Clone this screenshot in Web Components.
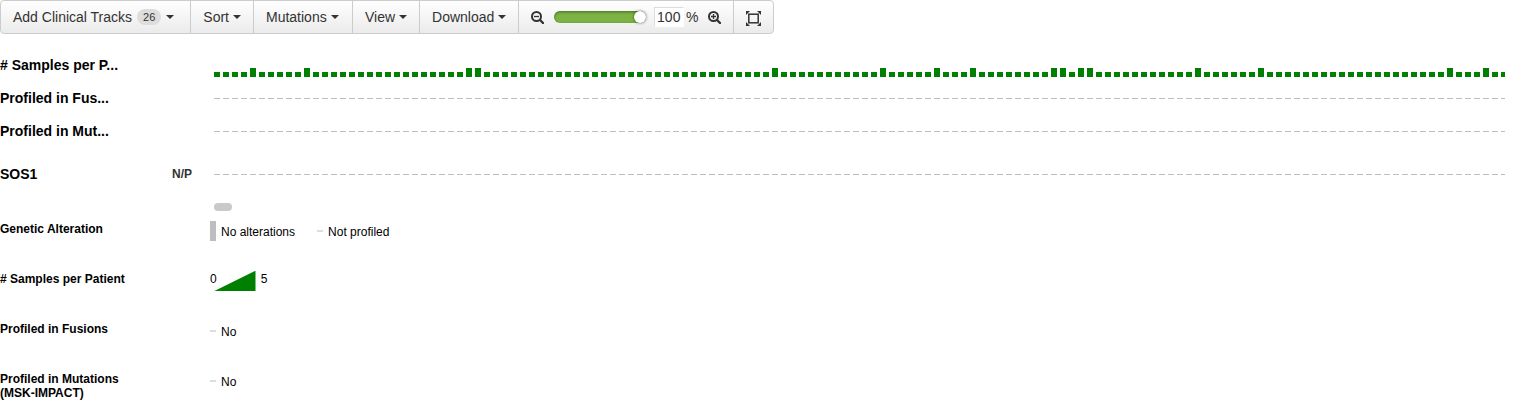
<!DOCTYPE html>
<html lang="en">
<head>
<meta charset="utf-8">
<title>Oncoprint</title>
<style>
body { margin: 0; background: #fff; font-family: "Liberation Sans", Arial, sans-serif; font-size: 14px; color: #000; }
</style>
</head>
<body>
<onco-print></onco-print>
<script>
const define = (name, html, setup) => {
  const template = document.createElement('template');
  template.innerHTML = html;
  customElements.define(name, class extends HTMLElement {
    constructor() {
      super();
      this.attachShadow({ mode: 'open' }).append(template.content.cloneNode(true));
    }
    connectedCallback() { if (setup) setup(this, this.shadowRoot); }
  });
};

define('menu-button', `
<style>
:host { display: flex; box-sizing: border-box; border-right: 1px solid #ccc; }
button { display: flex; align-items: center; gap: 4px; padding: 0 12px; border: 0; background: none; font: inherit; line-height: 20px; color: #333; white-space: nowrap; cursor: pointer; }
.caret { border: 4px solid transparent; border-top-color: #333; border-bottom: 0; }
:host([counted]) button { gap: 5px; padding-right: 16px; }
:host([plain]) { border-right: 0; }
:host([plain]) .caret { display: none; }
</style>
<button type="button"><slot></slot><span class="caret"></span></button>`,
(host, root) => {
  const label = host.getAttribute('label');
  if (label) root.querySelector('button').setAttribute('aria-label', label);
});

define('count-badge', `
<style>
:host { display: block; padding: 1px 6px; border-radius: 8px; background: #ddd; font-size: 11px; line-height: 14px; }
</style><slot></slot>`);

define('zoom-control', `
<style>
:host { display: flex; align-items: center; padding: 0 12px; border-right: 1px solid #ccc; color: #333; }
button { display: flex; padding: 0; border: 0; background: none; color: inherit; }
svg { display: block; width: 13px; height: 13px; fill: none; stroke: currentColor; }
input { box-sizing: border-box; margin: 0; font: inherit; color: inherit; }
input[type=range] { appearance: none; width: 92px; height: 12px; margin: 0 8px 0 10px; border-radius: 6px; background: #7cb342; box-shadow: inset 0 1px 3px rgba(0,0,0,.4); outline: 0; }
input[type=range]::-webkit-slider-thumb { appearance: none; width: 12px; height: 12px; border-radius: 6px; background: #fff; box-shadow: 0 0 3px rgba(0,0,0,.6); }
input[type=text] { width: 30px; height: 20px; padding: 0 0 0 2px; border: 1px solid #fff; border-top-color: #ddd; border-left-color: #ddd; background: #fff; }
label { display: flex; align-items: center; gap: 2px; margin-right: 9px; }
</style>
<button type="button" aria-label="Zoom out"><svg viewBox="0 0 13 13"><circle cx="5.5" cy="5.5" r="4.5" stroke-width="2"/><path d="M9 9l3 3" stroke-width="2.4" stroke-linecap="round"/><path d="M3 5.5h5" stroke-width="1.3"/></svg></button>
<input type="range" min="0" max="100" value="100" aria-label="Zoom">
<label><input type="text" value="100" aria-label="Zoom percent"><span>%</span></label>
<button type="button" aria-label="Zoom in"><svg viewBox="0 0 13 13"><circle cx="5.5" cy="5.5" r="4.5" stroke-width="2"/><path d="M9 9l3 3" stroke-width="2.4" stroke-linecap="round"/><path d="M3 5.5h5M5.5 3v5" stroke-width="1.3"/></svg></button>`);

define('tool-bar', `
<style>
:host { display: flex; width: fit-content; box-sizing: border-box; height: 34px; border: 1px solid #ccc; border-radius: 4px; background: linear-gradient(#fff, #ebebeb); }
.wide { width: 99px; }
svg { display: block; width: 15px; height: 15px; margin-top: 3px; fill: none; stroke: #333; }
</style>
<menu-button counted>Add Clinical Tracks <count-badge>26</count-badge></menu-button>
<menu-button>Sort</menu-button>
<menu-button class="wide">Mutations</menu-button>
<menu-button>View</menu-button>
<menu-button class="wide">Download</menu-button>
<zoom-control></zoom-control>
<menu-button plain label="Fit to screen"><svg viewBox="0 0 15 15"><rect x="2.8" y="3.2" width="9.4" height="8.6" stroke-width="1.5"/><path d="M0 0h4L0 4zM15 0h-4l4 4zM0 15h4l-4-4zM15 15h-4l4-4z" fill="#333" stroke="none"/></svg></menu-button>`);

define('track-row', `
<style>
:host { display: grid; grid-template-columns: 192px minmax(0, 1fr); column-gap: 22px; height: 20px; }
.head { display: flex; justify-content: space-between; line-height: 16px; white-space: nowrap; font-weight: bold; }
.info { font-size: 12px; color: #333; }
.cells { overflow: hidden; height: 20px; }
svg { display: block; width: 100%; height: 20px; }
</style>
<div class="head"><slot></slot><slot class="info" name="info"></slot></div>
<div class="cells"><svg aria-hidden="true"></svg></div>`,
(host, root) => {
  const samples = host.getAttribute('tall');
  const tall = new Set((samples || '').split(' ').map(Number));
  let cells = '';
  for (let i = 0; i < 144; i++) {
    const height = samples ? (tall.has(i) ? 9 : 5) : 1;
    const y = samples ? 20 - height : 8;
    cells += `<rect x="${i * 9}" y="${y}" width="6" height="${height}" fill="${samples ? '#008000' : '#bebebe'}"/>`;
  }
  root.querySelector('svg').innerHTML = cells;
});

define('legend-row', `
<style>
:host { display: grid; grid-template-columns: 190px minmax(0, 1fr); column-gap: 20px; min-height: 50px; font-size: 12px; line-height: 14px; }
.title { padding-top: 1px; font-weight: bold; }
.items { display: flex; align-items: flex-start; gap: 22px; }
</style>
<div class="title"><slot name="title"></slot></div><div class="items"><slot></slot></div>`);

define('legend-item', `
<style>
:host { display: flex; align-items: center; gap: 5px; height: 20px; }
i { width: 6px; height: 2px; background: #ddd; }
span { padding-top: 2px; }
:host([full]) i { height: 20px; background: #bebebe; }
</style><i></i><span><slot></slot></span>`);

define('legend-ramp', `
<style>
:host { display: flex; line-height: 16px; }
svg { width: 42px; height: 20px; margin: 0 5px 0 -3px; fill: #008000; }
</style><span>0</span><svg viewBox="0 0 42 20" aria-hidden="true"><path d="M0 20.2L41.5 -.3v20.5z"/></svg><span>5</span>`);

define('onco-print', `
<style>
:host { display: block; }
.tracks { display: flex; flex-direction: column; gap: 13px; padding: 23px 15px 0 0; }
.genes { padding-top: 10px; }
.scroll { width: 18px; height: 8px; margin: 17px 0 10px 214px; border-radius: 4px; background: #c9c9c9; }
</style>
<tool-bar></tool-bar>
<section class="tracks">
<track-row tall="4 10 28 29 62 74 80 84 93 94 96 97 109 116 137 141"># Samples per P...</track-row>
<track-row>Profiled in Fus...</track-row>
<track-row>Profiled in Mut...</track-row>
<div class="genes"><track-row>SOS1<span slot="info">N/P</span></track-row></div>
</section>
<div class="scroll"></div>
<section>
<legend-row><span slot="title">Genetic Alteration</span><legend-item full>No alterations</legend-item><legend-item>Not profiled</legend-item></legend-row>
<legend-row><span slot="title"># Samples per Patient</span><legend-ramp></legend-ramp></legend-row>
<legend-row><span slot="title">Profiled in Fusions</span><legend-item>No</legend-item></legend-row>
<legend-row><span slot="title">Profiled in Mutations<br>(MSK-IMPACT)</span><legend-item>No</legend-item></legend-row>
</section>`);
</script>
</body>
</html>
